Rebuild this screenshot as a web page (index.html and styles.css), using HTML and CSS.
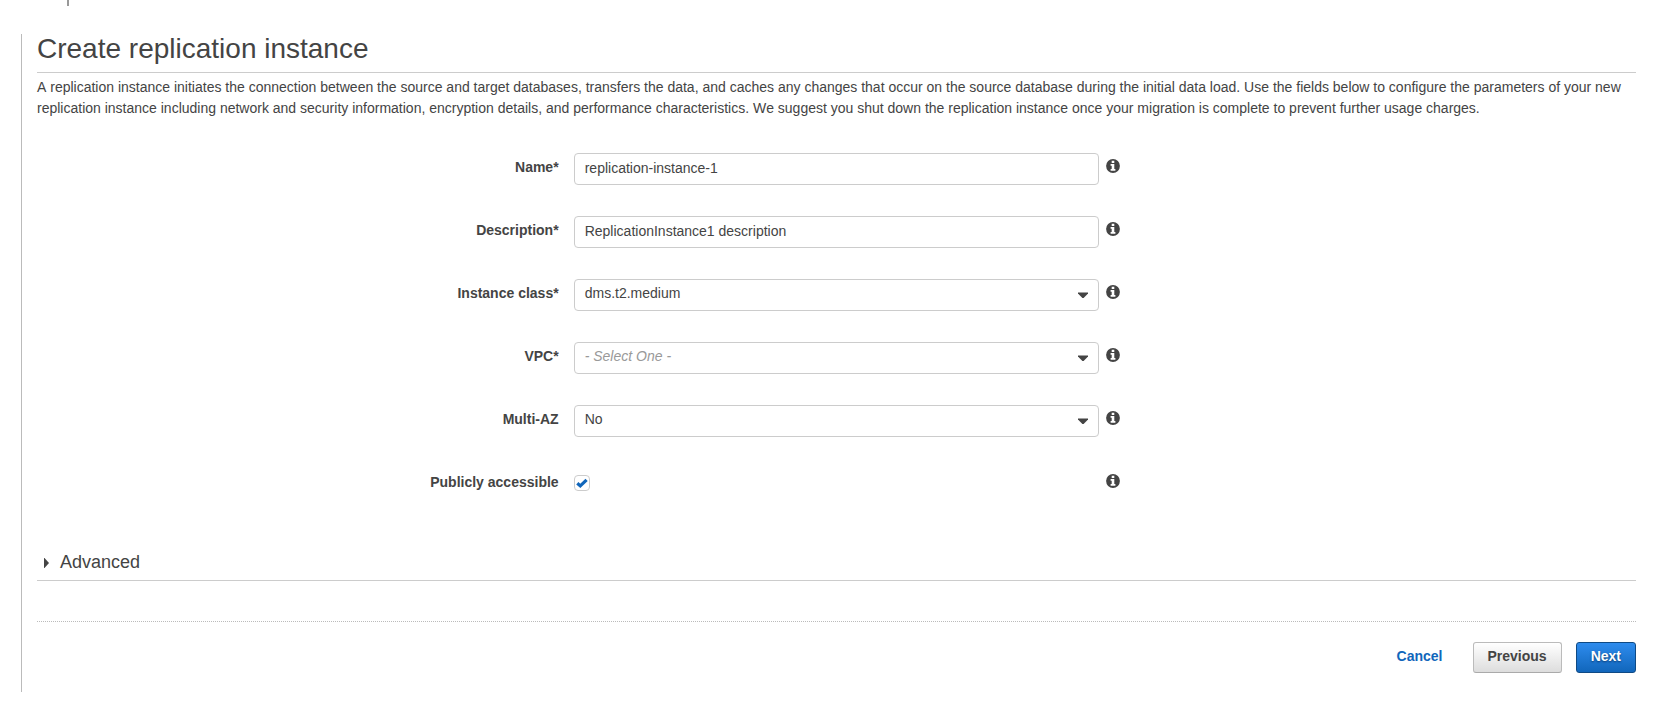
FILE: index.html
```html
<!DOCTYPE html>
<html lang="en">
<head>
<meta charset="utf-8">
<title>Create replication instance</title>
<link rel="stylesheet" href="styles.css">
</head>
<body>
<svg class="sprite" width="0" height="0">
<symbol id="info" viewBox="0 0 14 14"><circle cx="7" cy="7" r="6.900" fill="#444"/><path d="M5.700 1.700h2.600v2.300H5.700zM4.600 5h3.700v5h1.100v1.700H4.600V10h1.100V6.700H4.600z" fill="#fff"/></symbol>
<symbol id="caret" viewBox="0 0 10 6"><path d="M0 .5h10v1L5.600 6H4.400L0 1.500z" fill="#444"/></symbol>
</svg>
<div class="stub"></div>
<main class="panel">
<h1 class="title">Create replication instance</h1>
<p class="intro">A replication instance initiates the connection between the source and target databases, transfers the data, and caches any changes that occur on the source database during the initial data load. Use the fields below to configure the parameters of your new replication instance including network and security information, encryption details, and performance characteristics. We suggest you shut down the replication instance once your migration is complete to prevent further usage charges.</p>
<div class="form">
<div class="row"><label class="label">Name*</label><div class="field">replication-instance-1</div><svg class="info"><use href="#info"/></svg></div>
<div class="row"><label class="label">Description*</label><div class="field">ReplicationInstance1 description</div><svg class="info"><use href="#info"/></svg></div>
<div class="row"><label class="label">Instance class*</label><div class="field select">dms.t2.medium<svg class="caret"><use href="#caret"/></svg></div><svg class="info"><use href="#info"/></svg></div>
<div class="row"><label class="label">VPC*</label><div class="field select"><em class="placeholder">- Select One -</em><svg class="caret"><use href="#caret"/></svg></div><svg class="info"><use href="#info"/></svg></div>
<div class="row"><label class="label">Multi-AZ</label><div class="field select">No<svg class="caret"><use href="#caret"/></svg></div><svg class="info"><use href="#info"/></svg></div>
<div class="row"><label class="label">Publicly accessible</label><div><span class="check"><svg class="tick" viewBox="0 0 14 14"><path d="M2.300 7.200l3 2.700 6.300-6.100" fill="none" stroke="#1166bb" stroke-width="3.200"/></svg></span></div><svg class="info"><use href="#info"/></svg></div>
</div>
<div class="advanced"><svg class="arrow" viewBox="0 0 5 10"><path d="M0 0h.5L5 5 .5 10H0z" fill="#444"/></svg><span>Advanced</span></div>
<div class="actions"><a class="cancel">Cancel</a><button class="btn">Previous</button><button class="btn primary">Next</button></div>
</main>
</body>
</html>
```
FILE: styles.css
```css
* { box-sizing: border-box; }
body { margin: 0; background: #fff; color: #444; font: 14px/21px "Liberation Sans", Arial, sans-serif; }
.sprite { display: none; }
.stub { width: 2px; height: 6px; margin-left: 67px; background: #999; }
.panel { height: 658px; margin: 28px 20px 0 21px; padding-left: 15px; border-left: 1px solid #bbb; }
.title { height: 39px; margin: 0; border-bottom: 1px solid #ccc; font-size: 28px; font-weight: normal; line-height: 30px; }
.intro { height: 42px; margin: 4px 0 0; font-kerning: none; }
.form { padding-top: 34px; }
.row { display: grid; grid-template-columns: 522px 525px 14px; height: 32px; margin-bottom: 31px; }
.label { padding: 4px 0.4px 0 0; font-weight: bold; text-align: right; }
.label + * { margin-left: 15px; margin-right: -15px; }
.field { display: flex; justify-content: space-between; padding: 4px 10px 0 9.7px; border: 1px solid #ccc; border-radius: 4px; }
.select { padding-top: 3px; }
.row > .info { width: 14px; height: 14px; margin: 6px 0 0 22px; }
.caret { width: 10px; height: 6px; margin-top: 9px; }
.placeholder { color: #999; }
.check { display: block; width: 16px; height: 16px; margin-top: 7px; border: 1px solid #ccc; border-radius: 4px; }
.tick { display: block; width: 14px; height: 14px; }
.advanced { display: flex; height: 50px; padding: 20px 0 0 6.5px; border-bottom: 1px solid #ccc; font-size: 18px; line-height: 22px; }
.arrow { width: 5px; height: 10px; margin: 7px 11.500px 0 0; }
.actions { display: flex; justify-content: flex-end; margin-top: 40px; padding-top: 20px; border-top: 1px dotted #bbb; font-weight: bold; }
.cancel { margin: 4px 30px 0 0; color: #1166bb; }
.btn { height: 31px; margin: 0; padding: 0 14px 3px; border: 1px solid #bbb; border-bottom-color: #aaa; border-radius: 3px; background: linear-gradient(#fff, #ddd); color: #444; font: bold 14px/26px "Liberation Sans", Arial, sans-serif; }
.primary { margin-left: 14px; border-color: #0f4a85; background: linear-gradient(#2e8cee, #1166bb); color: #fff; text-shadow: 0 1px 2px #0a3a70; }
```
